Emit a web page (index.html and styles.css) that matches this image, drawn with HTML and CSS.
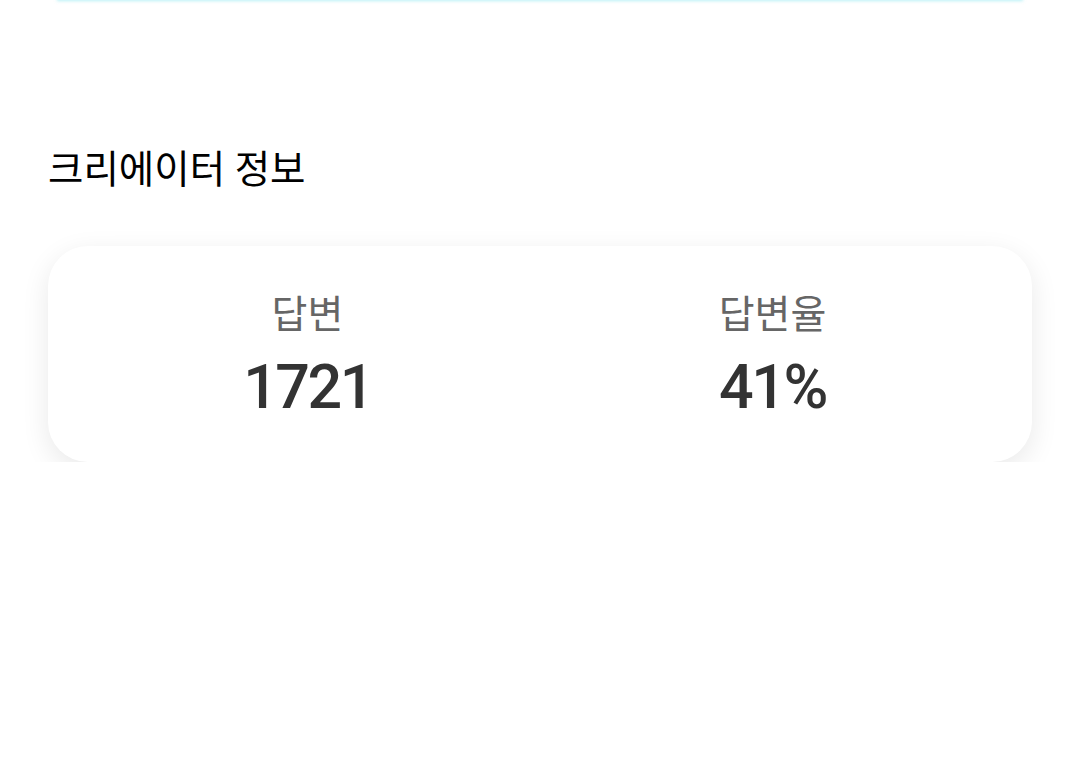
FILE: index.html
```html
<!DOCTYPE html>
<html lang="ko">
<head>
	<meta charset="UTF-8">
	<title>크리에이터 정보</title>
	<link rel="stylesheet" href="styles.css">
</head>
<body>
<!-- 위쪽 카드 (스크롤되어 아래 끝만 보임) -->
<div class="topcard"></div>

<div class="section">
   <h2 class="title">크리에이터 정보</h2>
   <div class="card">
      <div class="stat">
         <div class="label">답변</div>
         <div class="value">1721</div>
      </div>
      <div class="stat">
         <div class="label">답변율</div>
         <div class="value">41%</div>
      </div>
   </div>
</div>
</body>
</html>
```
FILE: styles.css
```css
html,body{
	margin: 0;
	background: #fff;
	font-family: Roboto, "Noto Sans CJK KR", sans-serif;
}
.topcard{
	height: 40px;
	margin: -40px 57px 0;
	background: #fff;
	box-shadow: 0 1px 3px rgba(120,230,240,0.5);
}
.section{
	padding: 0 48px;
}
.title{
	margin: 142px 0 0;
	font-size: 38.5px;
	font-weight: 400;
	line-height: 56px;
	color: #000;
}
.card{
	margin-top: 48px;
	height: 216px;
	padding: 0 27px;
	border-radius: 40px;
	background: #fff;
	box-shadow: 0 8px 28px rgba(0,0,0,0.09);
	display: flex;
	align-items: center;
}
.stat{
	flex: 1;
	text-align: center;
}
.label{
	font-size: 39px;
	line-height: 50px;
	color: #666;
}
.value{
	margin-top: 16px;
	font-size: 61px;
	font-weight: 500;
	letter-spacing: -2.5px;
	line-height: 62px;
	color: #333;
}
```
